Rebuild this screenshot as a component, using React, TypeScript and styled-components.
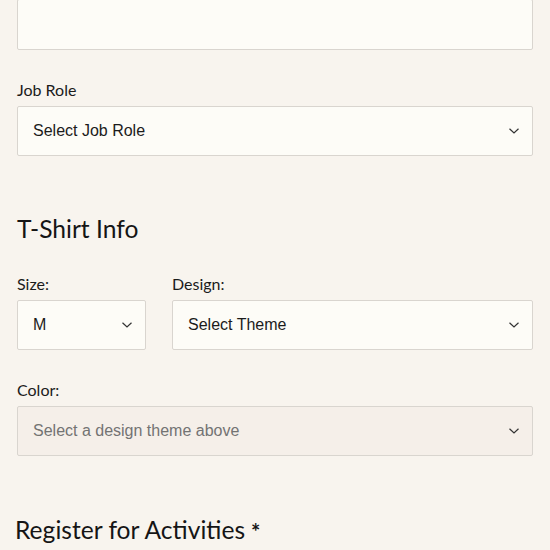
import React from "react";
import styled, { createGlobalStyle } from "styled-components";

const Global = createGlobalStyle`
  html, body { margin: 0; padding: 0; background: #f8f4ee; }
  body { font-family: Lato, "Noto Sans", sans-serif; color: #1b1b1b; overflow: hidden; }
`;

const Form = styled.form`
  display: flex;
  flex-direction: column;
  padding: 0 17px;
  margin-top: -1px;
`;

const Field = styled.div<{ $mb?: number }>`
  display: flex;
  flex-direction: column;
  margin-bottom: ${(p) => p.$mb ?? 0}px;
  min-width: 0;
`;

const Label = styled.label`
  font-family: Lato, "Noto Sans", sans-serif;
  font-size: 16px;
  line-height: 20px;
  margin-bottom: 6px;
  color: #1b1b1b;
`;

const TextBox = styled.div`
  box-sizing: border-box;
  height: 51px;
  background: #fdfcf7;
  border: 1px solid #d9d5cf;
  border-radius: 2px;
`;

const SelectBox = styled.div<{ $disabled?: boolean }>`
  box-sizing: border-box;
  height: 50px;
  display: flex;
  align-items: center;
  justify-content: space-between;
  padding: 0 12px 0 15px;
  background: ${(p) => (p.$disabled ? "#f5efe9" : "#fdfcf7")};
  border: 1px solid #d9d5cf;
  border-radius: 2px;
  font-family: "Liberation Sans", Arial, sans-serif;
  font-size: 16px;
  color: ${(p) => (p.$disabled ? "#737373" : "#1b1b1b")};
`;

const Heading = styled.h2<{ $mt: number; $ml?: number }>`
  margin: ${(p) => p.$mt}px 0 0 ${(p) => p.$ml ?? 0}px;
  font-family: Lato, "Noto Sans", sans-serif;
  font-weight: 400;
  font-size: 24.6px;
  line-height: 30px;
  color: #151515;
`;

const Row = styled.div`
  display: grid;
  grid-template-columns: 129px 1fr;
  column-gap: 26px;
  margin-top: 30px;
`;

const ColorField = styled(Field)`
  margin-top: 30px;
`;

const Star = styled.span`
  font-size: 22px;
  font-weight: 700;
  margin-left: 6px;
  position: relative;
  top: 1px;
`;

const Chevron = () => (
  <svg width="12" height="8" viewBox="0 0 12 8">
    <path d="M1.5 1.8 L6 6 L10.5 1.8" fill="none" stroke="#333" strokeWidth="1.2" />
  </svg>
);

const Select = ({ text, disabled }: { text: string; disabled?: boolean }) => (
  <SelectBox $disabled={disabled}>
    <span>{text}</span>
    <Chevron />
  </SelectBox>
);

export default function App() {
  return (
    <>
      <Global />
      <Form>
        <Field $mb={30}>
          <TextBox />
        </Field>
        <Field>
          <Label>Job Role</Label>
          <Select text="Select Job Role" />
        </Field>
        <Heading $mt={58}>T-Shirt Info</Heading>
        <Row>
          <Field>
            <Label>Size:</Label>
            <Select text="M" />
          </Field>
          <Field>
            <Label>Design:</Label>
            <Select text="Select Theme" />
          </Field>
        </Row>
        <ColorField>
          <Label>Color:</Label>
          <Select text="Select a design theme above" disabled />
        </ColorField>
        <Heading $mt={59} $ml={-2}>
          Register for Activities<Star>*</Star>
        </Heading>
      </Form>
    </>
  );
}
